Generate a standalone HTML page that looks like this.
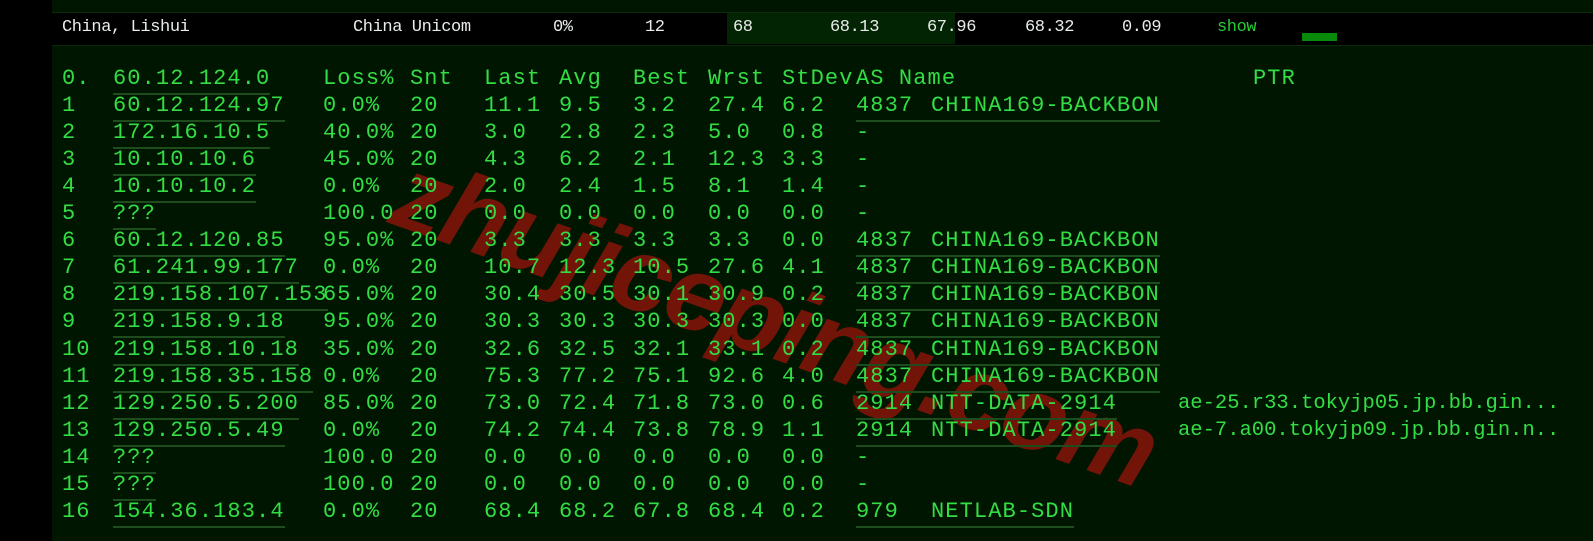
<!DOCTYPE html>
<html><head><meta charset="utf-8"><style>
html,body{margin:0;padding:0;width:1593px;height:541px;overflow:hidden;background:#000;}
#wrap{position:fixed;left:0;top:0;width:1593px;height:541px;overflow:hidden;background:#000;}
#main{position:absolute;left:52px;top:0;width:1541px;height:541px;background:#011601;}
#hdr{position:absolute;left:52px;top:12px;width:1541px;height:32px;background:#000;border-top:1px solid #0c2a0c;border-bottom:1px solid #0c2a0c;}
#hg{position:absolute;left:727px;top:13px;width:228px;height:31px;background:#022402;}
.h{position:absolute;top:16px;font:17px "Liberation Mono",monospace;letter-spacing:-0.4px;color:#e8ecea;line-height:24px;}
.t{position:absolute;font:22px "Liberation Mono",monospace;letter-spacing:1.1px;color:#33dd44;line-height:26px;white-space:pre;z-index:2}
.u{border-bottom:2px solid #1d4d1d;padding-bottom:1px}
.p{position:absolute;font:20.5px "Liberation Mono",monospace;color:#33dd44;line-height:26px;white-space:pre;z-index:2}
#wm{position:absolute;left:398px;top:128px;font:bold italic 106px "Liberation Sans",sans-serif;color:#721408;transform:rotate(19.5deg);transform-origin:0 50%;white-space:nowrap;z-index:1;letter-spacing:-2px}
</style></head><body><div id="wrap">
<div id="main"></div><div id="hdr"></div><div id="hg"></div>
<div class="h" style="left:62px">China, Lishui</div>
<div class="h" style="left:353px">China Unicom</div>
<div class="h" style="left:553px">0%</div>
<div class="h" style="left:645px">12</div>
<div class="h" style="left:733px">68</div>
<div class="h" style="left:830px">68.13</div>
<div class="h" style="left:927px">67.96</div>
<div class="h" style="left:1025px">68.32</div>
<div class="h" style="left:1122px">0.09</div>
<div class="h" style="left:1217px;color:#22cc33">show</div>
<div style="position:absolute;left:1302px;top:33px;width:35px;height:8px;background:#0a8a0a"></div>
<div id="wm">zhujiceping.com</div>
<div id="rows"></div>
</div>
<script>
var X=[62,113,323,410,484,559,633,708,782,856,931];
var R=[
["0.","60.12.124.0","Loss%","Snt","Last","Avg","Best","Wrst","StDev","AS Name","",""],
["1","60.12.124.97","0.0%","20","11.1","9.5","3.2","27.4","6.2","4837","CHINA169-BACKBON",""],
["2","172.16.10.5","40.0%","20","3.0","2.8","2.3","5.0","0.8","-","",""],
["3","10.10.10.6","45.0%","20","4.3","6.2","2.1","12.3","3.3","-","",""],
["4","10.10.10.2","0.0%","20","2.0","2.4","1.5","8.1","1.4","-","",""],
["5","???","100.0","20","0.0","0.0","0.0","0.0","0.0","-","",""],
["6","60.12.120.85","95.0%","20","3.3","3.3","3.3","3.3","0.0","4837","CHINA169-BACKBON",""],
["7","61.241.99.177","0.0%","20","10.7","12.3","10.5","27.6","4.1","4837","CHINA169-BACKBON",""],
["8","219.158.107.153","65.0%","20","30.4","30.5","30.1","30.9","0.2","4837","CHINA169-BACKBON",""],
["9","219.158.9.18","95.0%","20","30.3","30.3","30.3","30.3","0.0","4837","CHINA169-BACKBON",""],
["10","219.158.10.18","35.0%","20","32.6","32.5","32.1","33.1","0.2","4837","CHINA169-BACKBON",""],
["11","219.158.35.158","0.0%","20","75.3","77.2","75.1","92.6","4.0","4837","CHINA169-BACKBON",""],
["12","129.250.5.200","85.0%","20","73.0","72.4","71.8","73.0","0.6","2914","NTT-DATA-2914","ae-25.r33.tokyjp05.jp.bb.gin..."],
["13","129.250.5.49","0.0%","20","74.2","74.4","73.8","78.9","1.1","2914","NTT-DATA-2914","ae-7.a00.tokyjp09.jp.bb.gin.n.."],
["14","???","100.0","20","0.0","0.0","0.0","0.0","0.0","-","",""],
["15","???","100.0","20","0.0","0.0","0.0","0.0","0.0","-","",""],
["16","154.36.183.4","0.0%","20","68.4","68.2","67.8","68.4","0.2","979","NETLAB-SDN",""]];
var h="";
R.forEach(function(r,i){var y=66+i*27.05;
for(var c=0;c<10;c++){if(!r[c])continue;var txt=r[c],cls="t";
if(c==1)cls+=" u";
if(c==9&&r[10]){cls+=" u";txt='<span style="display:inline-block;width:75px">'+r[9]+'</span>'+r[10];}
h+='<span class="'+cls+'" style="left:'+X[c]+'px;top:'+y+'px">'+txt+'</span>';}
if(i==0)h+='<span class="t" style="left:1253px;top:'+y+'px">PTR</span>';
if(r[11])h+='<span class="p" style="left:1178px;top:'+y+'px">'+r[11]+'</span>';});
document.getElementById("rows").innerHTML=h;
</script>
</body></html>
